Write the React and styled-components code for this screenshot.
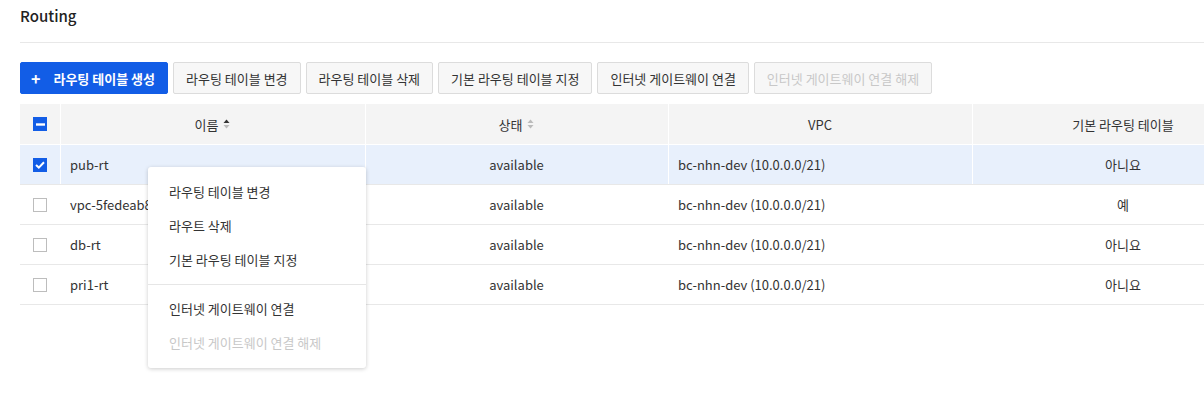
import React from 'react';
import styled, { createGlobalStyle } from 'styled-components';

const GlobalStyle = createGlobalStyle`
  html, body {
    margin: 0;
    padding: 0;
    background: #fff;
    overflow: hidden;
  }
  body {
    font-family: "Noto Sans CJK KR", "Noto Sans", sans-serif;
    color: #333;
  }
`;

const Page = styled.div`
  width: 1204px;
  height: 408px;
  position: relative;
  overflow: hidden;
  padding-left: 20px;
  box-sizing: border-box;
`;

const Title = styled.h2`
  margin: 0;
  height: 43px;
  line-height: 32px;
  font-size: 15px;
  font-weight: 500;
  color: #222;
  border-bottom: 1px solid #e8e8e8;
  box-sizing: border-box;
`;

const Toolbar = styled.div`
  display: flex;
  gap: 5px;
  margin-top: 19px;
  height: 32px;
`;

const Button = styled.button`
  height: 32px;
  padding: ${(p) => (p.$primary ? '0 12px 0 10px' : '0 12px')};
  font-family: inherit;
  font-size: 13px;
  border: 1px solid ${(p) => (p.$primary ? '#125de6' : '#dcdcdc')};
  border-radius: 2px;
  background: ${(p) => (p.$primary ? '#125de6' : '#f7f7f7')};
  color: ${(p) => (p.$primary ? '#fff' : p.disabled ? '#c8c8c8' : '#333')};
  font-weight: ${(p) => (p.$primary ? 700 : 400)};
  display: flex;
  align-items: center;
  white-space: nowrap;
  box-sizing: border-box;
  cursor: pointer;
`;

const Plus = styled.span`
  font-size: 16px;
  font-weight: 700;
  margin: 0 13px 0 0;
`;

const Table = styled.div`
  margin-top: 10px;
  width: 1254px;
`;

const Row = styled.div`
  display: grid;
  grid-template-columns: 40px 305px 303px 304px 302px;
  height: ${(p) => (p.$head ? '41px' : '40px')};
  border-bottom: 1px solid ${(p) => (p.$head ? '#fff' : '#e8e8e8')};
  box-sizing: border-box;
  background: ${(p) => (p.$head ? '#f4f4f4' : p.$selected ? '#e8f0fc' : '#fff')};
`;

const Cell = styled.div`
  display: flex;
  align-items: center;
  justify-content: ${(p) => (p.$align === 'left' ? 'flex-start' : 'center')};
  padding-left: ${(p) => (p.$align === 'left' ? '10px' : '0')};
  font-size: 13px;
  color: #333;
  box-shadow: ${(p) => (p.$sep ? 'inset 1px 0 0 #fff' : 'none')};
  white-space: nowrap;
  overflow: hidden;
  gap: 5px;
`;

const Box = styled.span`
  width: 14px;
  height: 14px;
  box-sizing: border-box;
  border: 1px solid ${(p) => (p.$on ? '#125de6' : '#bdbdbd')};
  background: ${(p) => (p.$on ? '#125de6' : '#fff')};
  display: flex;
  align-items: center;
  justify-content: center;
`;

const Menu = styled.div`
  position: absolute;
  left: 148px;
  top: 167px;
  width: 218px;
  padding: 8px 0;
  background: #fff;
  border-radius: 3px;
  box-shadow: 0 1px 4px rgba(0, 0, 0, 0.2);
  box-sizing: border-box;
`;

const MenuItem = styled.div`
  height: 34px;
  line-height: 34px;
  padding-left: 21px;
  font-size: 13px;
  color: ${(p) => (p.$disabled ? '#c8c8c8' : '#333')};
`;

const Divider = styled.div`
  height: 1px;
  margin: 7px 0;
  background: #e6e6e6;
`;

const SortIcon = ({ active }) => (
  <svg width="7" height="10" viewBox="0 0 7 10">
    <path d="M3.5 0.5 L6.5 4 L0.5 4 Z" fill={active ? '#333' : '#bbb'} />
    <path d="M3.5 9.5 L6.5 6 L0.5 6 Z" fill="#bbb" />
  </svg>
);

const Check = ({ state }) => (
  <Box $on={state !== 'off'}>
    {state === 'on' && (
      <svg width="10" height="8" viewBox="0 0 10 8">
        <path d="M1 4 L3.8 6.6 L9 1.2" stroke="#fff" strokeWidth="2" fill="none" />
      </svg>
    )}
    {state === 'mixed' && (
      <svg width="9" height="3" viewBox="0 0 9 3">
        <rect width="9" height="2.4" y="0.3" fill="#fff" />
      </svg>
    )}
  </Box>
);

const rows = [
  { name: 'pub-rt', def: '아니요', selected: true },
  { name: 'vpc-5fedeab8', def: '예' },
  { name: 'db-rt', def: '아니요' },
  { name: 'pri1-rt', def: '아니요' },
];

export default function App() {
  return (
    <Page>
      <GlobalStyle />
      <Title>Routing</Title>
      <Toolbar>
        <Button $primary>
          <Plus>+</Plus>라우팅 테이블 생성
        </Button>
        <Button>라우팅 테이블 변경</Button>
        <Button>라우팅 테이블 삭제</Button>
        <Button>기본 라우팅 테이블 지정</Button>
        <Button>인터넷 게이트웨이 연결</Button>
        <Button disabled>인터넷 게이트웨이 연결 해제</Button>
      </Toolbar>
      <Table>
        <Row $head>
          <Cell><Check state="mixed" /></Cell>
          <Cell $sep>이름 <SortIcon active /></Cell>
          <Cell $sep>상태 <SortIcon /></Cell>
          <Cell $sep>VPC</Cell>
          <Cell $sep>기본 라우팅 테이블</Cell>
        </Row>
        {rows.map((r) => (
          <Row key={r.name} $selected={r.selected}>
            <Cell><Check state={r.selected ? 'on' : 'off'} /></Cell>
            <Cell $sep={r.selected} $align="left">{r.name}</Cell>
            <Cell $sep={r.selected}>available</Cell>
            <Cell $sep={r.selected} $align="left">bc-nhn-dev (10.0.0.0/21)</Cell>
            <Cell $sep={r.selected}>{r.def}</Cell>
          </Row>
        ))}
      </Table>
      <Menu>
        <MenuItem>라우팅 테이블 변경</MenuItem>
        <MenuItem>라우트 삭제</MenuItem>
        <MenuItem>기본 라우팅 테이블 지정</MenuItem>
        <Divider />
        <MenuItem>인터넷 게이트웨이 연결</MenuItem>
        <MenuItem $disabled>인터넷 게이트웨이 연결 해제</MenuItem>
      </Menu>
    </Page>
  );
}
